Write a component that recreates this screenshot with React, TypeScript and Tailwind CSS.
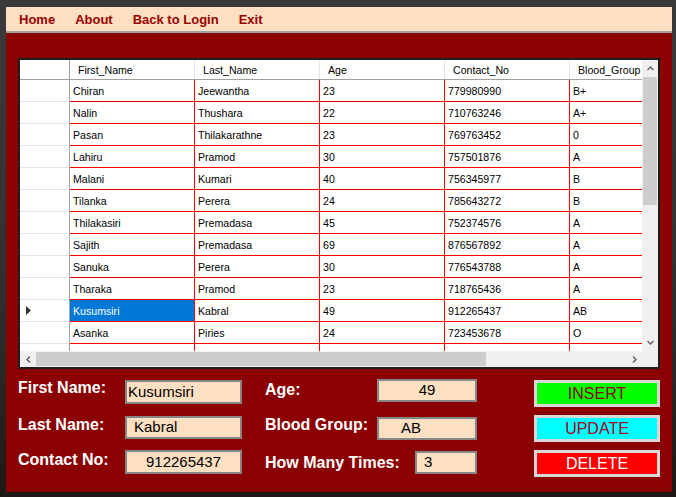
const rows: string[][] = [
  ["Chiran", "Jeewantha", "23", "779980990", "B+"],
  ["Nalin", "Thushara", "22", "710763246", "A+"],
  ["Pasan", "Thilakarathne", "23", "769763452", "0"],
  ["Lahiru", "Pramod", "30", "757501876", "A"],
  ["Malani", "Kumari", "40", "756345977", "B"],
  ["Tilanka", "Perera", "24", "785643272", "B"],
  ["Thilakasiri", "Premadasa", "45", "752374576", "A"],
  ["Sajith", "Premadasa", "69", "876567892", "A"],
  ["Sanuka", "Perera", "30", "776543788", "A"],
  ["Tharaka", "Pramod", "23", "718765436", "A"],
  ["Kusumsiri", "Kabral", "49", "912265437", "AB"],
  ["Asanka", "Piries", "24", "723453678", "O"],
  ["Sunimal", "Premarathne", "52", "784567123", "O"],
];

const columns = ["First_Name", "Last_Name", "Age", "Contact_No", "Blood_Group"];
const selectedRow = 10;

function Chevron({ dir }: { dir: "up" | "down" | "left" | "right" }) {
  const points = {
    up: "1.5,6 4.5,3 7.5,6",
    down: "1.5,3 4.5,6 7.5,3",
    left: "6,1.5 3,4.5 6,7.5",
    right: "3,1.5 6,4.5 3,7.5",
  }[dir];
  return (
    <svg width="9" height="9" viewBox="0 0 9 9">
      <polyline points={points} fill="none" stroke="#606060" strokeWidth="1.4" />
    </svg>
  );
}

function DataGrid() {
  return (
    <div className="mt-[25px] ml-[12px] w-[642px] h-[311px] border-2 border-[#1e1e1e] bg-white flex">
      <div className="flex flex-col w-[622px]">
        <div className="h-[291px] overflow-hidden text-[10.6px] text-black leading-none">
          {/* header */}
          <div className="flex h-[20px] border-b border-[#a0a0a0]">
            <div className="w-[50px] shrink-0 border-r border-[#a0a0a0]" />
            {columns.map((c) => (
              <div
                key={c}
                className="w-[125px] shrink-0 border-r border-[#e4e4e4] flex items-center pl-[8px] pt-[1px]"
              >
                {c}
              </div>
            ))}
          </div>
          {rows.map((r, i) => (
            <div key={i} className="flex h-[22px]">
              <div className="w-[50px] shrink-0 border-r border-[#a0a0a0] border-b border-b-[#e3e3e3] flex items-center pl-[6px]">
                {i === selectedRow && (
                  <svg width="6" height="9" viewBox="0 0 6 9">
                    <polygon points="0,0 5,4.5 0,9" fill="#333" />
                  </svg>
                )}
              </div>
              {r.map((v, j) => (
                <div
                  key={j}
                  className={
                    "w-[125px] shrink-0 border-r border-b border-[#ff0000] flex items-center pl-[3px] pt-[1px] " +
                    (i === selectedRow && j === 0 ? "bg-[#0078d7] text-white" : "")
                  }
                >
                  {v}
                </div>
              ))}
            </div>
          ))}
        </div>
        {/* horizontal scrollbar */}
        <div className="h-[16px] bg-[#f0f0f0] flex items-center">
          <div className="w-[16px] h-full flex items-center justify-center">
            <Chevron dir="left" />
          </div>
          <div className="w-[450px] h-[14px] bg-[#cdcdcd]" />
          <div className="flex-1" />
          <div className="w-[16px] h-full flex items-center justify-center">
            <Chevron dir="right" />
          </div>
        </div>
      </div>
      {/* vertical scrollbar */}
      <div className="w-[16px] flex flex-col">
        <div className="flex-1 bg-[#f0f0f0] flex flex-col items-center">
          <div className="h-[17px] flex items-center justify-center">
            <Chevron dir="up" />
          </div>
          <div className="w-[14px] h-[128px] bg-[#cdcdcd]" />
          <div className="flex-1" />
          <div className="h-[17px] flex items-center justify-center">
            <Chevron dir="down" />
          </div>
        </div>
        <div className="h-[16px] bg-[#f0f0f0]" />
      </div>
    </div>
  );
}

export default function App() {
  const label = "text-[16px] font-bold leading-[18px] text-white whitespace-nowrap";
  const box =
    "bg-[#ffdfc1] border-2 border-[#868686] text-[15px] text-black flex items-center";
  const btn =
    "w-[126px] h-[27px] border-[3px] border-[#d8d8d8] text-[16px] flex items-center justify-center";

  return (
    <div className="w-[676px] h-[497px] pt-[7px] pl-[6px] bg-[linear-gradient(180deg,#3a3a3d_0%,#333336_45%,#2a2726_75%,#1d1815_100%)] font-['Liberation_Sans',Arial,sans-serif]">
      <div className="w-[666px] h-[485px] bg-[#8b0000] flex flex-col">
        {/* menu bar */}
        <div className="h-[26px] bg-[#ffdfc1] border-b-2 border-[#a2a2a2] flex items-center pl-[3px] pt-[1px] text-[13px] font-bold text-[#990000]">
          <span className="px-[10px]">Home</span>
          <span className="px-[10px]">About</span>
          <span className="px-[10px]">Back to Login</span>
          <span className="px-[10px]">Exit</span>
        </div>

        <DataGrid />

        <div className="mt-[10px] ml-[12px] flex flex-col">
          <div className="h-[36px] flex items-start">
            <div className={label + " w-[107px]"}>First Name:</div>
            <div className={box + " w-[117px] h-[24px] mt-[1px] pl-[1px]"}>Kusumsiri</div>
            <div className={label + " w-[112px] ml-[23px] mt-[2px]"}>Age:</div>
            <div className={box + " w-[100px] h-[23px] justify-center"}>49</div>
            <div className={btn + " ml-[57px] mt-[1px] bg-[#00ff00] text-[#8b0000]"}>INSERT</div>
          </div>
          <div className="h-[35px] flex items-start">
            <div className={label + " w-[107px] mt-[1px]"}>Last Name:</div>
            <div className={box + " w-[117px] h-[23px] mt-[1px] pl-[7px]"}>Kabral</div>
            <div className={label + " w-[112px] ml-[23px] mt-[1px]"}>Blood Group:</div>
            <div className={box + " w-[100px] h-[23px] mt-[2px] pl-[22px]"}>AB</div>
            <div className={btn + " ml-[57px] bg-[#00ffff] text-[#a00028]"}>UPDATE</div>
          </div>
          <div className="h-[30px] flex items-start">
            <div className={label + " w-[107px] mt-[1px]"}>Contact No:</div>
            <div className={box + " w-[117px] h-[24px] justify-center"}>912265437</div>
            <div className={label + " w-[150px] ml-[23px] mt-[4px]"}>How Many Times:</div>
            <div className={box + " w-[62px] h-[23px] mt-[1px] pl-[7px]"}>3</div>
            <div className={btn + " ml-[57px] bg-[#ff0000] text-white"}>DELETE</div>
          </div>
        </div>
      </div>
    </div>
  );
}
